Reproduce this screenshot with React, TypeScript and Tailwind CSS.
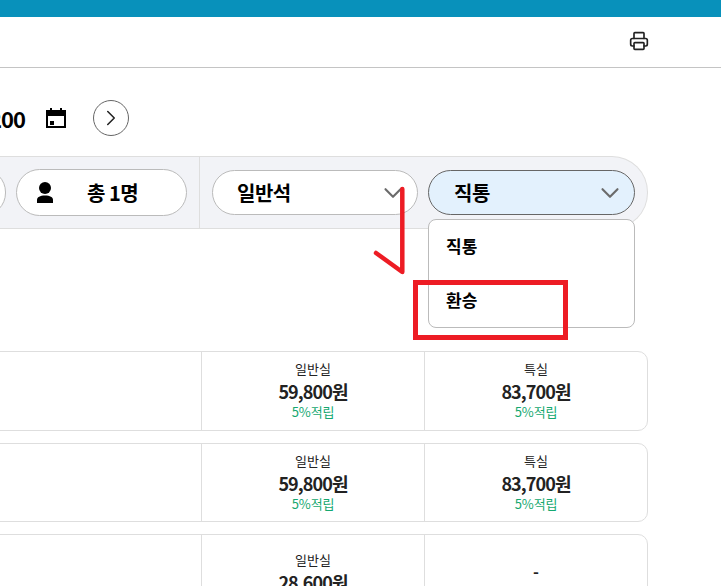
import { ChevronDown, ChevronRight, Printer } from 'lucide-react';

const rows = [
  { first: '59,800원', second: '83,700원', height: 'h-[80px]', pad: 'pt-[6px]' },
  { first: '59,800원', second: '83,700원', height: 'h-[79px]', pad: 'pt-[6px]' },
  { first: '28,600원', second: null, height: 'h-[80px]', pad: 'pt-[14px]' },
];

function Fare({ label, price, pad }: { label: string; price: string; pad: string }) {
  return (
    <div className={`flex flex-col items-center ${pad}`}>
      <span className="text-[13px] leading-[21px] tracking-[0.1px] text-[#222]">{label}</span>
      <span className="text-[18px] leading-[25px] font-bold tracking-[-0.9px] text-[#222]">{price}</span>
      <span className="text-[13px] leading-[15px] tracking-[-0.2px] text-[#16a870]">5%적립</span>
    </div>
  );
}

export default function App() {
  return (
    <div className="relative w-[721px] h-[586px] overflow-hidden bg-white font-['Noto_Sans_CJK_KR','Noto_Sans',sans-serif]">
      <div className="h-[17px] bg-[#0891bb]" />

      {/* 상단 인쇄 버튼 */}
      <div className="flex justify-end items-center pr-[72px] pb-[2px] h-[51px] border-b border-[#c4c4c4]">
        <Printer size={20} strokeWidth={2} className="text-[#222]" />
      </div>

      {/* 날짜 */}
      <div className="flex items-center mt-[32px] h-[36px] -ml-[11px]">
        <span className="text-[22px] font-bold leading-none tracking-[-1px] text-black">200</span>
        <svg viewBox="0 0 20 20" className="ml-[21px] w-[20px] h-[20px]">
          <path
            fill="#000"
            d="M4 0h2v2h8V0h2v2h4v18H0V2h4V0zM2 8v10h16V8H2zm2 5h4v4H4v-4z"
          />
        </svg>
        <button className="flex justify-center items-center ml-[27px] border border-[#666] rounded-full w-[36px] h-[36px]">
          <ChevronRight size={26} strokeWidth={1.4} className="text-[#222]" />
        </button>
      </div>

      {/* 검색 조건 */}
      <div className="relative mt-[20px] w-[648px]">
        <div className="flex items-center bg-[#f2f3f7] border-y border-r border-[#dedede] rounded-r-[36px] h-[73px]">
          <div className="shrink-0 -ml-[40px] bg-white border border-[#bbb] rounded-[24px] w-[46px] h-[47px]" />
          <div className="flex shrink-0 items-center ml-[10px] bg-white border border-[#bbb] rounded-[24px] w-[171px] h-[47px]">
            <svg viewBox="0 0 16 21" className="ml-[20px] w-[16px] h-[21px]">
              <circle cx="8" cy="6" r="6" fill="#000" />
              <path fill="#000" d="M0 21v-3c0-3 3-4.500 8-4.500s8 1.500 8 4.500v3H0z" />
            </svg>
            <span className="ml-[34px] text-[20px] font-bold tracking-[-0.5px] text-black">총 1명</span>
          </div>
          <div className="self-stretch shrink-0 ml-[12px] border-l border-[#dedede]" />
          <div className="flex shrink-0 justify-between items-center ml-[12px] bg-white border border-[#bbb] rounded-[23px] pr-[9px] pl-[24px] w-[206px] h-[45px]">
            <span className="text-[20px] font-bold tracking-[-0.5px] text-black">일반석</span>
            <ChevronDown size={30} strokeWidth={1.7} className="text-[#6b6b6b]" />
          </div>
          <div className="flex shrink-0 justify-between items-center ml-[10px] bg-[#e3f1fd] border border-[#666] rounded-[23px] pr-[9px] pl-[25px] w-[207px] h-[45px]">
            <span className="text-[20px] font-bold tracking-[-0.5px] text-black">직통</span>
            <ChevronDown size={30} strokeWidth={1.7} className="text-[#6b6b6b]" />
          </div>
        </div>

        {/* 드롭다운 */}
        <div className="absolute top-[63px] left-[428px] z-10 flex flex-col bg-white border border-[#bbb] rounded-[8px] pl-[17px] w-[207px] h-[109px]">
          <span className="mt-[11px] text-[17px] leading-[30px] font-bold text-black">직통</span>
          <span className="mt-[24px] text-[17px] leading-[30px] font-bold text-black">환승</span>
        </div>
      </div>

      {/* 요금 목록 */}
      <div className="flex flex-col gap-[12px] mt-[122px] -ml-[20px] w-[668px]">
        {rows.map((row, i) => (
          <div key={i} className={`grid grid-cols-[221px_223px_1fr] border border-[#dedede] rounded-[10px] shrink-0 ${row.height}`}>
            <div className="border-r border-[#dedede]" />
            <div className="border-r border-[#dedede]">
              <Fare label="일반실" price={row.first} pad={row.pad} />
            </div>
            {row.second ? (
              <Fare label="특실" price={row.second} pad={row.pad} />
            ) : (
              <div className="pt-[24px] text-center text-[16px] font-bold text-[#222]">-</div>
            )}
          </div>
        ))}
      </div>

      {/* 빨간 주석 */}
      <svg viewBox="0 0 721 586" className="absolute top-0 left-0 z-20 w-[721px] h-[586px] pointer-events-none">
        <path d="M402.300 189V272L376 253" fill="none" stroke="#ed1c24" strokeWidth="4.500" strokeLinecap="round" strokeLinejoin="round" />
        <rect x="415.500" y="282.500" width="150" height="55" fill="none" stroke="#ed1c24" strokeWidth="5" />
      </svg>
    </div>
  );
}
